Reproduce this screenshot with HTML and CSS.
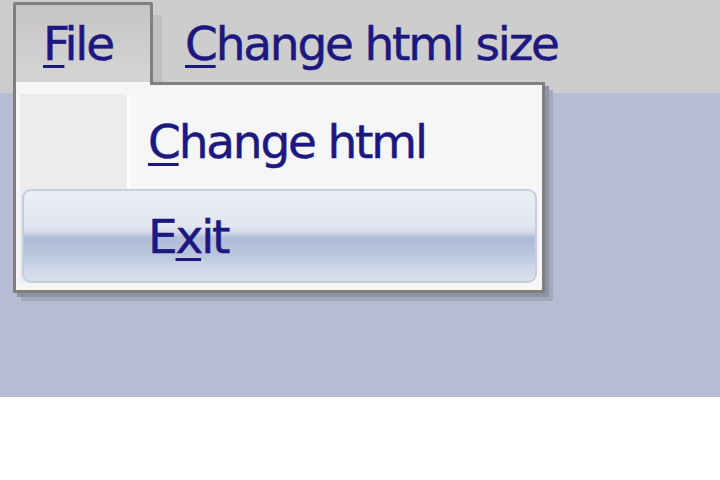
FILE: index.html
```html
<!DOCTYPE html>
<html lang="en">
<head>
<meta charset="utf-8">
<title>Menu</title>
<link rel="stylesheet" href="styles.css">
</head>
<body>
<div class="app">
  <nav class="menubar">
    <div class="menu-item is-open"><u>F</u>ile</div>
    <div class="menu-item"><u>C</u>hange html size</div>
  </nav>
  <div class="dropdown">
    <div class="dropdown-item"><span><u>C</u>hange html</span></div>
    <div class="dropdown-item is-hover"><span>E<u>x</u>it</span></div>
  </div>
</div>
</body>
</html>
```

FILE: styles.css
```css
body {
  margin: 0;
  background: #ffffff;
  font-family: "DejaVu Sans", Verdana, sans-serif;
}

.app {
  position: relative;
  height: 397px;
  background: #b6bdd3;
}

.menubar {
  display: flex;
  align-items: flex-start;
  height: 93px;
  box-sizing: border-box;
  padding-left: 13px;
  background: linear-gradient(#cdcdcd 0, #cdcdcd 84px, #cbccd1 93px);
}

.menu-item {
  font-size: 47px;
  line-height: 55px;
  letter-spacing: -2.2px;
  color: #1d1880;
  -webkit-text-stroke: 0.5px #1d1880;
  white-space: nowrap;
}

.menu-item + .menu-item {
  margin-left: 32px;
  padding-top: 16px;
}

.menu-item.is-open {
  position: relative;
  z-index: 2;
  box-sizing: border-box;
  width: 140px;
  height: 83px;
  margin-top: 2px;
  padding: 11px 0 0 27px;
  border: 3px solid #7f7f7f;
  border-bottom: 0;
  border-radius: 3px 3px 0 0;
  background: linear-gradient(#c5c5c5, #d6d6d6);
}

.menu-item.is-open::after {
  content: "";
  position: absolute;
  left: 0;
  right: 0;
  bottom: 0;
  height: 3px;
  background: #f7f7f7;
}

.menu-item.is-open::before {
  content: "";
  position: absolute;
  left: calc(100% + 3px);
  top: 10px;
  bottom: 3px;
  width: 9px;
  background: rgba(0, 0, 0, 0.06);
}

u {
  text-decoration: underline;
  text-decoration-thickness: 3px;
  text-underline-offset: 5px;
  text-decoration-skip-ink: none;
}

.dropdown {
  position: absolute;
  z-index: 1;
  left: 13px;
  top: 82px;
  width: 532px;
  height: 211px;
  box-sizing: border-box;
  padding: 9px 5px 7px 6px;
  border: 3px solid #7f7f7f;
  background: #f6f6f6;
  display: flex;
  flex-direction: column;
  gap: 1px;
  box-shadow: 4px 4px 0 #8e94a6, 8px 8px 0 #a2a9bd;
}

.dropdown::before {
  content: "";
  position: absolute;
  left: 4px;
  top: 9px;
  bottom: 7px;
  width: 107px;
  background: #ececec;
  border-right: 3px solid #fdfdfd;
}

.dropdown-item {
  position: relative;
  height: 94px;
  box-sizing: border-box;
  display: flex;
  align-items: center;
  padding-left: 124px;
  border: 2px solid transparent;
  border-radius: 9px;
  font-size: 47px;
  line-height: 55px;
  letter-spacing: -2.2px;
  color: #1d1880;
  -webkit-text-stroke: 0.5px #1d1880;
  white-space: nowrap;
}

.dropdown-item.is-hover {
  border-color: #c5cde0;
  background: linear-gradient(#eceff5 0%, #e0e5ef 40%, #d3d9e8 46%, #afbcd7 52%, #bac5dd 70%, #cfd7e7 86%, #d9dfeb 100%);
}
```
